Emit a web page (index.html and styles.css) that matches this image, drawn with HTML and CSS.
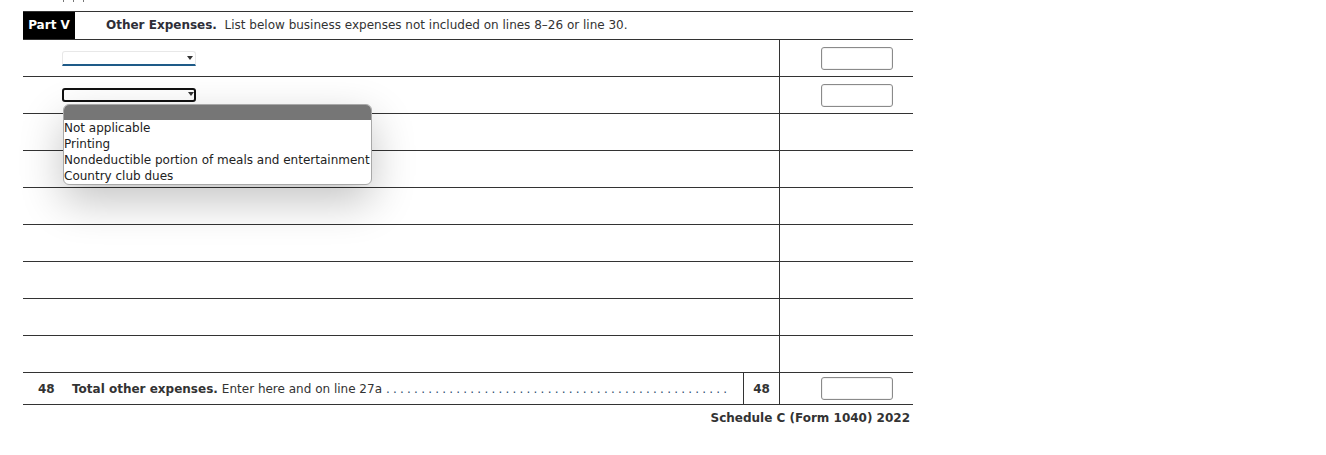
FILE: index.html
```html
<!DOCTYPE html>
<html lang="en">
<head>
<meta charset="utf-8">
<title>Schedule C Part V</title>
<link rel="stylesheet" href="styles.css">
</head>
<body>
<div class="ticks"><span></span><span></span><span></span></div>
<div class="form">
  <div class="head">
    <div class="part">Part V</div>
    <div class="title"><b>Other Expenses.</b>&nbsp; List below business expenses not included on lines 8–26 or line 30.</div>
  </div>

  <div class="row">
    <div class="desc"><div class="sel sel-blue"><span class="arrow"></span></div></div>
    <div class="amt"><div class="inp"></div></div>
  </div>
  <div class="row">
    <div class="desc">
      <div class="sel sel-focus"><span class="arrow"></span></div>
    </div>
    <div class="amt"><div class="inp"></div></div>
  </div>
  <div class="row"><div class="desc"></div><div class="amt"></div></div>
  <div class="row"><div class="desc"></div><div class="amt"></div></div>
  <div class="row"><div class="desc"></div><div class="amt"></div></div>
  <div class="row"><div class="desc"></div><div class="amt"></div></div>
  <div class="row"><div class="desc"></div><div class="amt"></div></div>
  <div class="row"><div class="desc"></div><div class="amt"></div></div>
  <div class="row"><div class="desc"></div><div class="amt"></div></div>

  <div class="total">
    <div class="tnum">48</div>
    <div class="tlabel"><b>Total other expenses.</b> Enter here and on line 27a <span class="dots">. . . . . . . . . . . . . . . . . . . . . . . . . . . . . . . . . . . . . . . . . . . . . . . . .</span></div>
    <div class="tline">48</div>
    <div class="amt"><div class="inp"></div></div>
  </div>
  <div class="foot">Schedule C (Form 1040) 2022</div>

  <div class="menu" role="listbox">
    <div class="menu-head"></div>
    <div class="opt">Not applicable</div>
    <div class="opt">Printing</div>
    <div class="opt">Nondeductible portion of meals and entertainment</div>
    <div class="opt">Country club dues</div>
  </div>
</div>
</body>
</html>
```

FILE: styles.css
```css
* { box-sizing: border-box; }
body {
  margin: 0;
  font-family: "DejaVu Sans", Verdana, sans-serif;
  font-size: 12px;
  color: #333;
  background: #fff;
}
.ticks {
  display: flex;
  gap: 9px;
  padding-left: 63px;
  height: 11px;
}
.ticks span {
  width: 1px;
  height: 2px;
  background: #777;
}
.form {
  position: relative;
  width: 890px;
  margin-left: 23px;
  border-top: 1px solid #333;
}
.head {
  display: flex;
  align-items: stretch;
  height: 28px;
  border-bottom: 1px solid #333;
}
.part {
  width: 52px;
  background: #000;
  color: #fff;
  font-weight: bold;
  display: flex;
  align-items: center;
  justify-content: center;
  padding-bottom: 1px;
}
.title {
  padding-left: 31px;
  display: flex;
  align-items: center;
  padding-bottom: 1px;
  color: #333;
}
.title b { color: #2e2e38; }
.row {
  display: flex;
  height: 37px;
  border-bottom: 1px solid #333;
}
.desc {
  width: 757px;
  display: flex;
  align-items: center;
  padding-left: 39px;
  border-right: 1px solid #333;
}
.amt {
  flex: 1;
  display: flex;
  align-items: center;
  justify-content: flex-end;
  padding-right: 20px;
}
.inp {
  width: 72px;
  height: 23px;
  border: 1px solid #8a8a8a;
  border-radius: 3px;
  background: #fff;
  box-shadow: inset 0 0 0 1px #f2f2f2;
}
.sel {
  position: relative;
  width: 134px;
  height: 15px;
  border-radius: 3px;
  background: #fff;
}
.sel-blue {
  border: 1px solid #e8e8e8;
  border-bottom: 2px solid #1e5b88;
  border-radius: 3px 3px 0 0;
  margin-top: 1px;
}
.sel-focus {
  height: 14px;
  border: 2px solid #111;
  border-radius: 3px;
}
.arrow {
  position: absolute;
  right: 2px;
  top: 4px;
  width: 0;
  height: 0;
  border-left: 3px solid transparent;
  border-right: 3px solid transparent;
  border-top: 4px solid #333;
}
.sel-focus .arrow { top: 2px; right: 0; }
.total {
  display: flex;
  height: 32px;
  border-bottom: 1px solid #333;
}
.tnum {
  width: 49px;
  padding-left: 15px;
  display: flex;
  align-items: center;
  font-weight: bold;
}
.tlabel {
  width: 671px;
  display: flex;
  align-items: center;
  white-space: nowrap;
}
.tlabel b { margin-right: 4px; }
.dots {
  margin-left: 4px;
  letter-spacing: -0.3px;
  color: #2f4f6f;
}
.tline {
  width: 37px;
  border-left: 1px solid #333;
  border-right: 1px solid #333;
  display: flex;
  align-items: center;
  justify-content: center;
  font-weight: bold;
}
.foot {
  text-align: right;
  font-weight: bold;
  padding-right: 3px;
  margin-top: 6px;
  color: #333;
}
.menu {
  position: absolute;
  left: 40px;
  top: 92px;
  width: 309px;
  border: 1px solid #a8a8a8;
  border-radius: 6px;
  background: #fff;
  overflow: hidden;
  box-shadow: 0 16px 44px rgba(0, 0, 0, 0.24);
  color: #222;
}
.menu-head {
  height: 15px;
  background: #767676;
}
.opt {
  height: 16px;
  line-height: 16px;
  white-space: nowrap;
}
```
